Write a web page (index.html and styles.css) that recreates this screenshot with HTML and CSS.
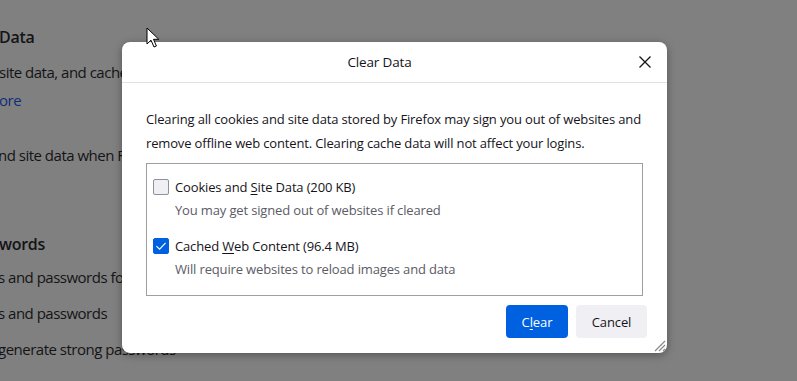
FILE: index.html
```html
<!DOCTYPE html>
<html>
<head>
<meta charset="utf-8">
<link rel="stylesheet" href="styles.css">
</head>
<body>
<div class="page">
  <div class="bg">
    <div class="bg-h h1">Data</div>
    <div class="bg-p p1">site data, and cache</div>
    <div class="bg-p link">ore</div>
    <div class="bg-p p2">nd site data when F</div>
    <div class="bg-h h2">words</div>
    <div class="bg-p p3">s and passwords fo</div>
    <div class="bg-p p4">s and passwords</div>
    <div class="bg-p p5">generate strong passwords</div>
  </div>

  <div class="dialog">
    <div class="dlg-header">
      <div class="dlg-title">Clear Data</div>
      <div class="dlg-close">
        <svg width="14" height="14" viewBox="0 0 14 14"><path d="M1.5 1.5 L12.5 12.5 M12.5 1.5 L1.5 12.5" stroke="#15141a" stroke-width="1.3" fill="none"/></svg>
      </div>
    </div>
    <div class="dlg-body">
      <p class="desc">Clearing all cookies and site data stored by Firefox may sign you out of websites and remove offline web content. Clearing cache data will not affect your logins.</p>
      <div class="group">
        <div class="opt">
          <div class="row"><span class="cb"></span><span class="lbl">Cookies and <u>S</u>ite Data (200 KB)</span></div>
          <div class="sub">You may get signed out of websites if cleared</div>
        </div>
        <div class="opt">
          <div class="row"><span class="cb checked"><svg width="16" height="16" viewBox="0 0 16 16"><path d="M3.4 8.2 L6.6 11.2 L12.6 4.8" stroke="#fff" stroke-width="1.1" fill="none"/></svg></span><span class="lbl">Cached <u>W</u>eb Content (96.4 MB)</span></div>
          <div class="sub">Will require websites to reload images and data</div>
        </div>
      </div>
      <div class="buttons">
        <button class="btn primary">C<u>l</u>ear</button>
        <button class="btn">Cancel</button>
      </div>
    </div>
    <svg class="grip" width="14" height="14" viewBox="0 0 14 14"><path d="M13 3 L3 13 M13 7 L7 13 M13 11 L11 13" stroke="#8a8a8a" stroke-width="1.2"/></svg>
  </div>

  <svg class="cursor" width="14" height="22" viewBox="0 0 14 22"><path d="M1 1 L1 17 L5 13.2 L8 20 L10.4 19 L7.5 12.3 L12.8 12.3 Z" fill="#fff" stroke="#000" stroke-width="1"/></svg>
</div>
</body>
</html>
```
FILE: styles.css
```css
html, body {
  margin: 0;
  padding: 0;
}
body {
  background: #808080;
  font-family: "Open Sans", "Noto Sans", sans-serif;
  overflow: hidden;
}
.page {
  position: relative;
  width: 797px;
  height: 381px;
  overflow: hidden;
}
.bg {
  display: flex;
  flex-direction: column;
  align-items: flex-start;
  color: #141416;
  padding-top: 24px;
}
.bg-h {
  font-size: 16px;
  font-weight: 600;
  letter-spacing: -0.3px;
  margin-left: -1px;
  line-height: 26px;
  white-space: nowrap;
}
.bg-p {
  font-size: 15px;
  letter-spacing: -0.5px;
  line-height: 22px;
  white-space: nowrap;
}
.p1 { margin-top: 11px; margin-left: -1px; }
.link { color: #0d2f78; margin-top: 6px; margin-left: -1px; }
.p2 { margin-top: 33px; margin-left: -2px; }
.h2 { margin-top: 65px; margin-left: -1px; }
.p3 { margin-top: 9px; margin-left: -2px; }
.p4 { margin-top: 14px; margin-left: -2px; }
.p5 { margin-top: 14px; margin-left: -2px; }

.dialog {
  position: absolute;
  left: 122px;
  top: 42px;
  width: 545px;
  height: 311px;
  background: #fff;
  border-radius: 8px;
  box-shadow: 0 2px 8px rgba(0,0,0,0.35);
  color: #15141a;
  font-size: 13px;
  letter-spacing: -0.15px;
}
.dlg-header {
  height: 40px;
  border-bottom: 1px solid #e0e0e6;
  display: flex;
  align-items: center;
}
.dlg-title {
  flex: 1;
  text-align: center;
  font-size: 13.5px;
}
.dlg-close {
  width: 16px;
  height: 16px;
  display: flex;
  align-items: center;
  justify-content: center;
  margin-right: 14px;
}
.dlg-body {
  padding: 24px 20px 0 24px;
}
.desc {
  margin: 0;
  line-height: 24px;
  width: 500px;
}
.group {
  margin-top: 8px;
  width: 497px;
  height: 133px;
  box-sizing: border-box;
  border: 1px solid #9f9f9f;
  padding: 11px 6px 0 6px;
}
.opt + .opt {
  margin-top: 13px;
}
.row {
  display: flex;
  align-items: center;
  height: 24px;
}
.cb {
  width: 16px;
  height: 16px;
  box-sizing: border-box;
  border: 1px solid #8f8f9d;
  background: #f0f0f4;
  border-radius: 2px;
  margin-right: 6px;
  display: flex;
}
.cb.checked {
  background: #0061e0;
  border-color: #0061e0;
}
.cb.checked svg {
  margin: -1px;
}
.lbl u, .btn u {
  text-decoration-thickness: 1px;
  text-underline-offset: 2px;
}
.sub {
  color: #5b5b66;
  padding-left: 22px;
  line-height: 22px;
}
.buttons {
  display: flex;
  justify-content: flex-end;
  gap: 8px;
  margin-top: 9px;
}
.btn {
  font-family: inherit;
  font-size: 13px;
  letter-spacing: -0.1px;
  height: 33px;
  border: none;
  border-radius: 4px;
  background: #f0f0f4;
  color: #15141a;
  padding: 0 12px;
}
.btn.primary {
  background: #0061e0;
  color: #fff;
  width: 62px;
}
.btn:not(.primary) {
  width: 71px;
}
.grip {
  position: absolute;
  right: 1px;
  bottom: 1px;
}
.cursor {
  position: absolute;
  left: 146px;
  top: 27px;
}
```
